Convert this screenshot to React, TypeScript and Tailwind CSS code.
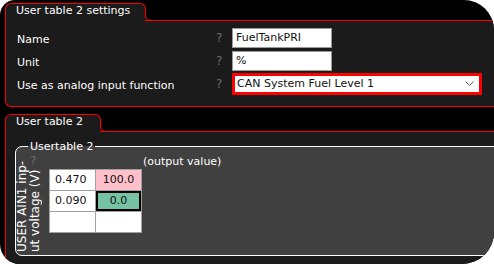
import React from "react";

const font = "font-['DejaVu_Sans',Verdana,sans-serif]";

const Tab = ({ title, width }: { title: string; width: string }) => (
  <div className="relative z-10 -mb-px flex items-end">
    <div
      className={`h-[18px] ${width} rounded-t-[6px] border border-b-0 border-[#ff0000] bg-[#1b1b1b] pl-[10px] text-[11px] leading-[13px] text-white`}
    >
      {title}
    </div>
    {/* flare where the tab meets the panel line */}
    <svg className="-ml-px" width="7" height="7" viewBox="0 0 7 7">
      <path d="M0 0 C0 4 2 6 7 6 L0 6 Z" fill="#1b1b1b" />
      <path d="M0.5 0 C0.5 4 2 6.5 7 6.5" fill="none" stroke="#ff0000" strokeWidth="1" />
    </svg>
  </div>
);

const Help = () => (
  <span className="w-[16px] text-[12px] leading-[14px] text-[#6b6b6b]">?</span>
);

const SettingsRow = ({ label, children }: { label: string; children: React.ReactNode }) => (
  <div className="flex items-center">
    <span className="w-[199px] pt-[3px] text-[11px] leading-[13px] text-white">{label}</span>
    <Help />
    {children}
  </div>
);

export default function App() {
  return (
    <div className={`h-[264px] w-[494px] overflow-hidden bg-white ${font}`}>
      <div className="h-full overflow-hidden rounded-tl-[15px] rounded-tr-[30px] rounded-br-[32px] rounded-bl-[20px] bg-black pl-[5px] pt-[3px]">
        {/* settings panel */}
        <Tab title="User table 2 settings" width="w-[141px]" />
        <div className="flex h-[87px] flex-col gap-[3px] rounded-bl-[6px] border-y border-l border-[#ff0000] bg-[#1b1b1b] pl-[11px] pt-[7px]">
          <SettingsRow label="Name">
            <div className="h-[20px] w-[100px] border border-[#9a9a9a] bg-white pl-[3px] text-[11px] leading-[18px] text-[#111]">
              FuelTankPRI
            </div>
          </SettingsRow>
          <SettingsRow label="Unit">
            <div className="h-[20px] w-[100px] border border-[#9a9a9a] bg-white pl-[3px] text-[11px] leading-[18px] text-[#111]">
              %
            </div>
          </SettingsRow>
          <div className="-mt-px">
            <SettingsRow label="Use as analog input function">
              <div className="flex h-[22px] w-[250px] items-center justify-between border-[3px] border-[#ff0000] bg-white pl-[2px] pr-[5px] text-[11px] leading-[16px] text-[#111]">
                <span>CAN System Fuel Level 1</span>
                <svg width="9" height="6" viewBox="0 0 9 6">
                  <path d="M0.5 0.5 L4.5 4.5 L8.5 0.5" fill="none" stroke="#555" strokeWidth="1" />
                </svg>
              </div>
            </SettingsRow>
          </div>
        </div>

        {/* table panel */}
        <div className="mt-[7px]">
          <Tab title="User table 2" width="w-[96px]" />
          <div className="h-[140px] rounded-bl-[10px] border-l border-t border-[#ff0000] bg-[#1b1b1b] pl-[9px] pt-[8px]">
            <fieldset className="h-[116px] w-[500px] rounded-[7px] border border-white bg-[#404040]">
              <legend className="ml-[12px] px-[2px] text-[11px] leading-[13px] text-white">
                Usertable 2
              </legend>
              <div className="flex items-start">
                <div className="relative w-[33px]">
                  <div className="mt-[2px] h-[97px] rotate-180 text-[12px] leading-[13px] text-white [writing-mode:vertical-rl]">
                    USER AIN1 inp-
                    <br />
                    ut voltage (V)
                  </div>
                  <span className="absolute left-[14px] top-[1px] text-[12px] leading-[14px] text-[#6b6b6b]">?</span>
                </div>
                <div className="flex flex-col">
                  <span className="mt-[2px] pl-[94px] text-[11px] leading-[13px] text-white">
                    (output value)
                  </span>
                  <div className="mt-px grid w-fit grid-cols-[45px_45px] gap-px bg-[#a0a0a0] p-px text-[11px] leading-[20px] text-[#111]">
                    <div className="h-[20px] bg-white pl-[5px]">0.470</div>
                    <div className="h-[20px] bg-[#ffc0cb] text-center">100.0</div>
                    <div className="h-[20px] bg-white pl-[5px]">0.090</div>
                    <div className="h-[20px] border-2 border-black bg-[#76c2a4] text-center leading-[16px]">
                      0.0
                    </div>
                    <div className="h-[20px] bg-white" />
                    <div className="h-[20px] bg-white" />
                  </div>
                </div>
              </div>
            </fieldset>
          </div>
        </div>
      </div>
    </div>
  );
}
